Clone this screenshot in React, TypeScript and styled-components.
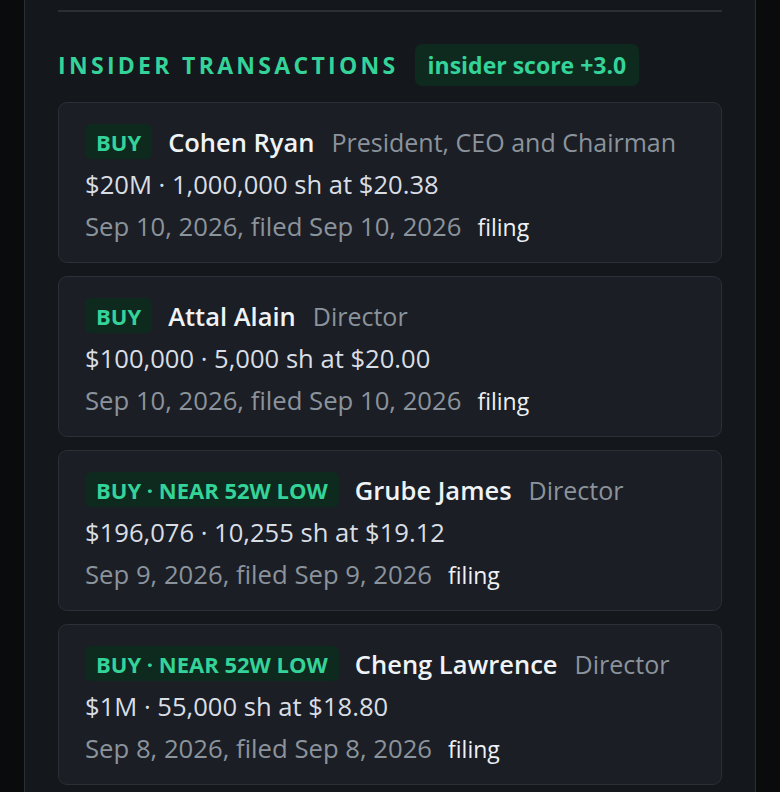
import styled, { createGlobalStyle } from "styled-components";

const GlobalStyle = createGlobalStyle`
  html, body {
    margin: 0;
    padding: 0;
    background: #0a0b0d;
  }
  body {
    font-family: "Open Sans", "Noto Sans", "Liberation Sans", sans-serif;
    -webkit-font-smoothing: antialiased;
  }
`;

const Page = styled.div`
  min-height: 792px;
  padding-left: 24px;
  overflow: hidden;
`;

const Panel = styled.section`
  width: 732px;
  box-sizing: border-box;
  min-height: 792px;
  background: #14171b;
  border-left: 1px solid #2a2e35;
  border-right: 1px solid #2a2e35;
  padding: 10px 33px 0;
`;

const Rule = styled.hr`
  margin: 0;
  border: 0;
  height: 2px;
  background: #2a2e35;
`;

const Header = styled.div`
  display: flex;
  align-items: center;
  gap: 16px;
  margin-top: 32px;
  margin-bottom: 16px;
`;

const Title = styled.h2`
  margin: 0;
  font-size: 23px;
  font-weight: 700;
  letter-spacing: 3.3px;
  color: #34d399;
  text-transform: uppercase;
  white-space: nowrap;
`;

const Pill = styled.span<{ $size?: "lg" | "sm" }>`
  display: inline-flex;
  align-items: center;
  box-sizing: border-box;
  height: ${({ $size }) => ($size === "lg" ? "42px" : "35px")};
  padding: 0 ${({ $size }) => ($size === "lg" ? "13px" : "11px")};
  border-radius: ${({ $size }) => ($size === "lg" ? "7px" : "6px")};
  background: #0e2a1e;
  color: #34d399;
  font-weight: 700;
  font-size: ${({ $size }) => ($size === "lg" ? "23px" : "22px")};
  white-space: nowrap;
`;

const List = styled.div`
  display: flex;
  flex-direction: column;
  gap: 13px;
`;

const Card = styled.article`
  background: #1b1e24;
  border: 1px solid #2b2f36;
  border-radius: 9px;
  padding: 21px 26px 19px;
  display: flex;
  flex-direction: column;
  gap: 10px;
`;

const TopRow = styled.div`
  display: flex;
  align-items: center;
  gap: 16px;
  white-space: nowrap;
`;

const Name = styled.span`
  font-size: 25.5px;
  font-weight: 600;
  color: #f0f3f6;
`;

const Role = styled.span`
  font-size: 25px;
  color: #8b939c;
  margin-left: 1px;
`;

const Amount = styled.div`
  font-size: 25.6px;
  line-height: 32px;
  color: #d9dee4;
`;

const DateRow = styled.div`
  display: flex;
  align-items: baseline;
  gap: 16px;
  line-height: 32px;
`;

const Dates = styled.span`
  font-size: 25.7px;
  color: #8b939c;
`;

const FilingLink = styled.a`
  font-size: 23px;
  color: #eef1f4;
  text-decoration: none;
`;

interface Txn {
  tag: string;
  name: string;
  role: string;
  amount: string;
  dates: string;
}

const txns: Txn[] = [
  {
    tag: "BUY",
    name: "Cohen Ryan",
    role: "President, CEO and Chairman",
    amount: "$20M · 1,000,000 sh at $20.38",
    dates: "Sep 10, 2026, filed Sep 10, 2026",
  },
  {
    tag: "BUY",
    name: "Attal Alain",
    role: "Director",
    amount: "$100,000 · 5,000 sh at $20.00",
    dates: "Sep 10, 2026, filed Sep 10, 2026",
  },
  {
    tag: "BUY · NEAR 52W LOW",
    name: "Grube James",
    role: "Director",
    amount: "$196,076 · 10,255 sh at $19.12",
    dates: "Sep 9, 2026, filed Sep 9, 2026",
  },
  {
    tag: "BUY · NEAR 52W LOW",
    name: "Cheng Lawrence",
    role: "Director",
    amount: "$1M · 55,000 sh at $18.80",
    dates: "Sep 8, 2026, filed Sep 8, 2026",
  },
];

const App = () => {
  return (
    <>
      <GlobalStyle />
      <Page>
        <Panel>
          <Rule />
          <Header>
            <Title>Insider Transactions</Title>
            <Pill $size="lg">insider score +3.0</Pill>
          </Header>
          <List>
            {txns.map((t, i) => (
              <Card key={i}>
                <TopRow>
                  <Pill>{t.tag}</Pill>
                  <Name>{t.name}</Name>
                  <Role>{t.role}</Role>
                </TopRow>
                <Amount>{t.amount}</Amount>
                <DateRow>
                  <Dates>{t.dates}</Dates>
                  <FilingLink href="#">filing</FilingLink>
                </DateRow>
              </Card>
            ))}
          </List>
        </Panel>
      </Page>
    </>
  );
};

export default App;
